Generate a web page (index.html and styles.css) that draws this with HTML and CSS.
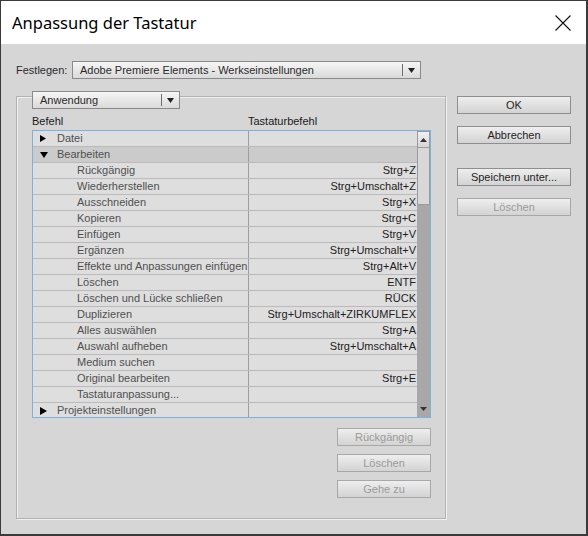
FILE: index.html
```html
<!doctype html>
<html lang="de">
<head>
    <meta charset="UTF-8">
    <title>Anpassung der Tastatur</title>
    <link rel="stylesheet" href="styles.css">
</head>
<body>
<div class="window">
    <div class="titlebar">
        <span class="title">Anpassung der Tastatur</span>
        <svg class="close" width="16" height="16" viewBox="0 0 16 16">
            <path d="M0.5 0.5 L15.5 15.5 M15.5 0.5 L0.5 15.5" stroke="#111" stroke-width="1.1" fill="none"/>
        </svg>
    </div>
    <div class="content">
        <div class="preset">
            <label for="preset">Festlegen:</label>
            <div class="combo combo-wide" id="preset">
                <span class="combo-text">Adobe Premiere Elements - Werkseinstellungen</span>
                <span class="combo-arrow"><svg width="7" height="5" viewBox="0 0 7 5"><path d="M0 0 H7 L3.5 5 Z" fill="#222"/></svg></span>
            </div>
        </div>
        <div class="main">
            <div class="group">
                <div class="combo combo-small">
                    <span class="combo-text">Anwendung</span>
                    <span class="combo-arrow"><svg width="7" height="5" viewBox="0 0 7 5"><path d="M0 0 H7 L3.5 5 Z" fill="#222"/></svg></span>
                </div>
                <div class="headers">
                    <span class="col-name">Befehl</span>
                    <span class="col-key">Tastaturbefehl</span>
                </div>
                <div class="list">
                    <div class="rows">
                        <div class="row">
                            <span class="cell-name top"><span class="toggle"><svg width="6" height="7" viewBox="0 0 6 7"><path d="M0 0 L6 3.5 L0 7 Z" fill="#000"/></svg></span>Datei</span>
                            <span class="cell-key"></span>
                        </div>
                        <div class="row selected">
                            <span class="cell-name top"><span class="toggle"><svg width="8" height="6" viewBox="0 0 8 6"><path d="M0 0 H8 L4 6 Z" fill="#000"/></svg></span>Bearbeiten</span>
                            <span class="cell-key"></span>
                        </div>
                        <div class="row"><span class="cell-name">Rückgängig</span><span class="cell-key">Strg+Z</span></div>
                        <div class="row"><span class="cell-name">Wiederherstellen</span><span class="cell-key">Strg+Umschalt+Z</span></div>
                        <div class="row"><span class="cell-name">Ausschneiden</span><span class="cell-key">Strg+X</span></div>
                        <div class="row"><span class="cell-name">Kopieren</span><span class="cell-key">Strg+C</span></div>
                        <div class="row"><span class="cell-name">Einfügen</span><span class="cell-key">Strg+V</span></div>
                        <div class="row"><span class="cell-name">Ergänzen</span><span class="cell-key">Strg+Umschalt+V</span></div>
                        <div class="row"><span class="cell-name">Effekte und Anpassungen einfügen</span><span class="cell-key">Strg+Alt+V</span></div>
                        <div class="row"><span class="cell-name">Löschen</span><span class="cell-key">ENTF</span></div>
                        <div class="row"><span class="cell-name">Löschen und Lücke schließen</span><span class="cell-key">RÜCK</span></div>
                        <div class="row"><span class="cell-name">Duplizieren</span><span class="cell-key">Strg+Umschalt+ZIRKUMFLEX</span></div>
                        <div class="row"><span class="cell-name">Alles auswählen</span><span class="cell-key">Strg+A</span></div>
                        <div class="row"><span class="cell-name">Auswahl aufheben</span><span class="cell-key">Strg+Umschalt+A</span></div>
                        <div class="row"><span class="cell-name">Medium suchen</span><span class="cell-key"></span></div>
                        <div class="row"><span class="cell-name">Original bearbeiten</span><span class="cell-key">Strg+E</span></div>
                        <div class="row"><span class="cell-name">Tastaturanpassung...</span><span class="cell-key"></span></div>
                        <div class="row">
                            <span class="cell-name top"><span class="toggle"><svg width="7" height="8" viewBox="0 0 7 8"><path d="M0 0 L7 4 L0 8 Z" fill="#000"/></svg></span>Projekteinstellungen</span>
                            <span class="cell-key"></span>
                        </div>
                    </div>
                    <div class="scrollbar">
                        <div class="scroll-btn up"><svg width="7" height="4" viewBox="0 0 7 4"><path d="M0 4 H7 L3.5 0 Z" fill="#333"/></svg></div>
                        <div class="scroll-thumb"></div>
                        <div class="scroll-track"></div>
                        <div class="scroll-btn down"><svg width="7" height="4" viewBox="0 0 7 4"><path d="M0 0 H7 L3.5 4 Z" fill="#333"/></svg></div>
                    </div>
                </div>
                <div class="actions">
                    <button class="btn" disabled>Rückgängig</button>
                    <button class="btn" disabled>Löschen</button>
                    <button class="btn" disabled>Gehe zu</button>
                </div>
            </div>
            <div class="side">
                <button class="btn">OK</button>
                <button class="btn">Abbrechen</button>
                <button class="btn save">Speichern unter...</button>
                <button class="btn" disabled>Löschen</button>
            </div>
        </div>
    </div>
</div>
</body>
</html>
```

FILE: styles.css
```css
* {
    box-sizing: border-box;
}

body {
    margin: 0;
    background-color: #d6d6d6;
    font-family: "Liberation Sans", Arial, sans-serif;
    font-size: 11px;
    color: #1e1e1e;
}

.window {
    width: 588px;
    height: 536px;
    border: 1px solid #3a3a3a;
    border-right-width: 2px;
    border-bottom-width: 2px;
    background-color: #d6d6d6;
    overflow: hidden;
}

.titlebar {
    height: 43px;
    background-color: #ffffff;
    display: flex;
    align-items: center;
    justify-content: space-between;
    padding: 0 15px 0 11px;
}

.title {
    font-family: "Noto Sans", sans-serif;
    font-size: 16.5px;
    color: #000000;
}

.close {
    display: block;
    margin-top: 1px;
}

.content {
    padding: 17px 0 0 15px;
}

/* Festlegen row */
.preset {
    display: flex;
    align-items: center;
}

.preset label {
    width: 56px;
    color: #2a2a2a;
}

.combo {
    height: 18px;
    border: 1px solid #8a8a8a;
    background: linear-gradient(#f6f6f6, #dadada);
    display: flex;
    align-items: center;
    padding-left: 7px;
    color: #2a2a2a;
}

.combo-text {
    flex: 1;
}

.combo-arrow {
    width: 18px;
    height: 12px;
    border-left: 1px solid #6e6e6e;
    display: flex;
    align-items: center;
    justify-content: center;
}

.combo-wide {
    width: 349px;
}

.combo-small {
    width: 148px;
    margin-top: -6px;
}

/* main area */
.main {
    display: flex;
    gap: 11px;
    margin-top: 17px;
}

.group {
    width: 430px;
    height: 423px;
    border: 1px solid #b2b2b2;
    box-shadow: inset 1px 1px 0 #f0f0f0, 1px 1px 0 #f0f0f0;
    padding: 0 14px 0 15px;
}

.headers {
    display: flex;
    height: 16px;
    line-height: 16px;
    margin-top: 4px;
    color: #1a1a1a;
}

.col-name {
    width: 216px;
}

.list {
    display: flex;
    height: 288px;
    margin-top: 1px;
    border: 1px solid #7fb1de;
    background-color: #dedede;
}

.rows {
    flex: 1;
    overflow: hidden;
}

.row {
    display: flex;
    height: 16px;
    line-height: 15px;
    border-bottom: 1px solid #bababa;
    color: #505050;
}

.row.selected {
    background-color: #cbcbcb;
}

.cell-name {
    width: 216px;
    border-right: 1px solid #9e9e9e;
    padding-left: 44px;
    white-space: nowrap;
    overflow: hidden;
}

.cell-name.top {
    display: flex;
    align-items: center;
    padding-left: 7px;
}

.toggle {
    width: 17px;
    display: flex;
    align-items: center;
}

.cell-key {
    flex: 1;
    text-align: right;
    padding-right: 1px;
    color: #222222;
    white-space: nowrap;
}

.scrollbar {
    width: 13px;
    display: flex;
    flex-direction: column;
    background-color: #a8a8a8;
}

.scroll-btn {
    height: 17px;
    display: flex;
    align-items: center;
    justify-content: center;
}

.scroll-btn.up {
    background: linear-gradient(#f0f0f0, #d6d6d6);
    border: 1px solid #9a9a9a;
}

.scroll-thumb {
    height: 57px;
    background-color: #d8d8d8;
    border: 1px solid #9a9a9a;
    border-top: none;
}

.scroll-track {
    flex: 1;
}

.scroll-btn.down {
    height: 16px;
}

/* buttons */
.btn {
    height: 18px;
    padding: 0;
    border: 1px solid #8e8e8e;
    background: linear-gradient(#eeeeee, #d3d3d3);
    font-family: inherit;
    font-size: 11px;
    color: #1e1e1e;
}

.btn:disabled {
    color: #9a9a9a;
    border-color: #a8a8a8;
}

.actions {
    display: flex;
    flex-direction: column;
    align-items: flex-end;
    gap: 8px;
    margin-top: 10px;
}

.actions .btn {
    width: 94px;
}

.side {
    width: 114px;
    display: flex;
    flex-direction: column;
    gap: 12px;
}

.side .save {
    margin-top: 12px;
}
```
